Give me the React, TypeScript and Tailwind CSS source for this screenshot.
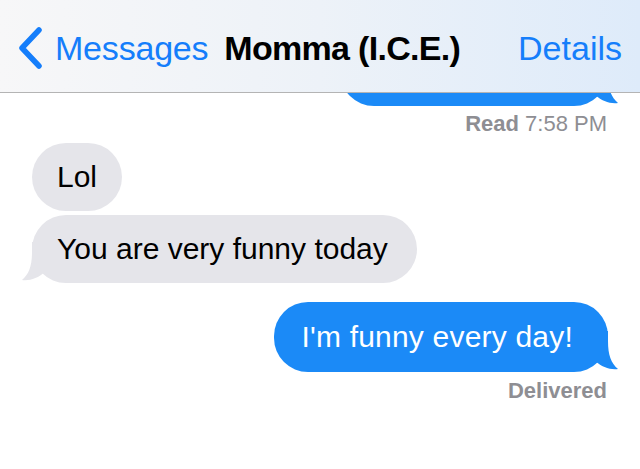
import React from 'react';

const BLUE = '#1b8af7';
const GRAY = '#e5e5ea';

function Tail({ side, color }: { side: 'left' | 'right'; color: string }) {
  // curled iOS 7 bubble tail, drawn for the right side and mirrored for the left
  return (
    <svg
      width="32"
      height="40"
      viewBox="0 0 32 40"
      className={
        side === 'right'
          ? 'absolute bottom-[1px] right-[-11px]'
          : 'absolute bottom-[1px] left-[-11px] -scale-x-100'
      }
    >
      <path d="M21 0 L21 10 C21 24 24 32 31 38 C23 39 15 36 8 30 L8 0 Z" fill={color} />
    </svg>
  );
}

function Bubble({
  text,
  sent,
  tail,
  className = '',
}: {
  text: string;
  sent?: boolean;
  tail?: boolean;
  className?: string;
}) {
  return (
    <div
      className={`relative rounded-[34px] text-[30px] leading-[36px] whitespace-nowrap ${
        sent ? 'bg-[#1b8af7] text-white' : 'bg-[#e5e5ea] text-black'
      } ${className}`}
    >
      {text}
      {tail && <Tail side={sent ? 'right' : 'left'} color={sent ? BLUE : GRAY} />}
    </div>
  );
}

export default function App() {
  return (
    <div
      className="w-[640px] h-[469px] bg-white overflow-hidden"
      style={{ fontFamily: '"Liberation Sans", Arial, sans-serif' }}
    >
      <header className="h-[93px] border-b border-[#b4b4b4] bg-gradient-to-r from-[#f7f7f8] via-[#edf2f8] to-[#deebfa] flex items-center pt-[4px] text-[34px] leading-[34px]">
        <svg width="26" height="42" viewBox="0 0 26 42" className="ml-[17px] shrink-0">
          <path d="M22 3 L5 21 L22 39" fill="none" stroke="#157efb" strokeWidth="5.5" strokeLinecap="round" strokeLinejoin="round" />
        </svg>
        <span className="ml-[12px] text-[#157efb] tracking-[-0.2px]">Messages</span>
        <span className="ml-[16px] font-bold text-black tracking-[-0.7px]">Momma (I.C.E.)</span>
        <span className="ml-auto mr-[18px] text-[#157efb]">Details</span>
      </header>

      <div className="flex flex-col">
        {/* earlier sent message, scrolled up under the bar */}
        <div className="overflow-hidden flex justify-end pr-[32px]">
          <Bubble text="" sent tail className="-mt-[55px] w-[268px] h-[68px]" />
        </div>
        <div className="mt-[7px] self-end mr-[33px] text-[22px] leading-[22px] text-[#8e8e93]">
          <span className="font-bold">Read</span> 7:58 PM
        </div>

        <div className="mt-[8px] flex flex-col items-start gap-[4px] pl-[32px]">
          <Bubble text="Lol" className="py-[16px] px-[25px]" />
          <Bubble text="You are very funny today" tail className="py-[16px] pl-[25px] pr-[29px]" />
        </div>

        <div className="mt-[19px] flex flex-col items-end pr-[32px]">
          <Bubble text="I'm funny every day!" sent tail className="py-[17px] pl-[27px] pr-[35px] tracking-[0.2px]" />
          <div className="mt-[8px] mr-[1px] text-[22px] leading-[22px] font-bold text-[#8e8e93]">Delivered</div>
        </div>
      </div>
    </div>
  );
}
